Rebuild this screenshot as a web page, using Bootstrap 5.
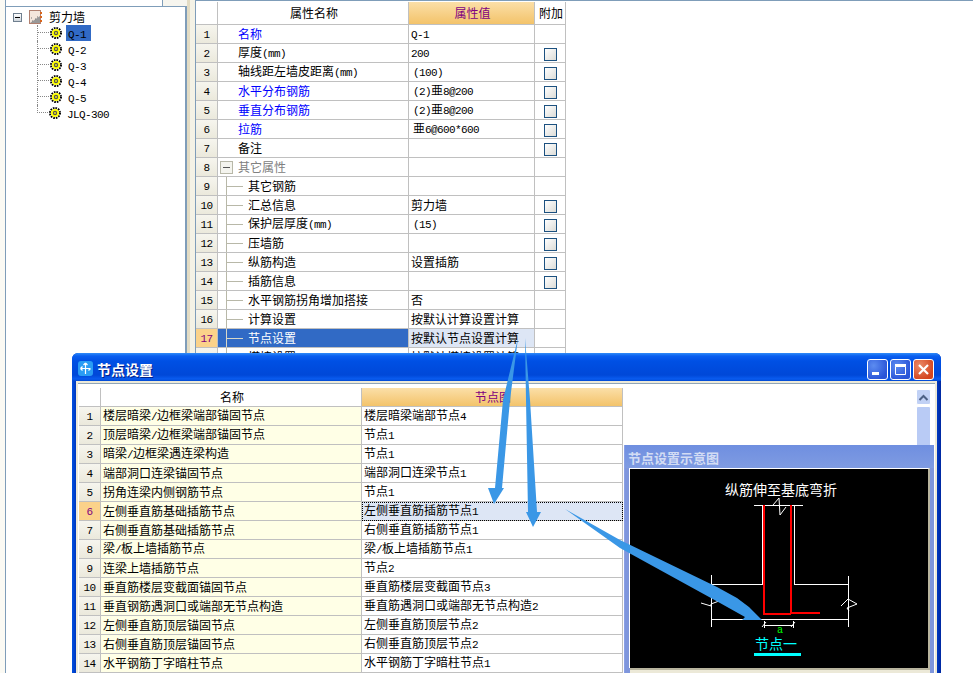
<!DOCTYPE html>
<html lang="zh-CN">
<head>
  <meta charset="UTF-8">
  <title>节点设置</title>
  <meta name="viewport" content="width=device-width, initial-scale=1">
  <link href="https://cdn.jsdelivr.net/npm/bootstrap@5.3.3/dist/css/bootstrap.min.css" rel="stylesheet">
  <style>
    html, body {
      height: 673px;
      overflow: hidden;
    }
    body {
      position: relative;
      background: #fff;
      color: #000;
      font-family: "Noto Sans CJK SC", "Liberation Sans", sans-serif;
      font-size: 12px;
      line-height: 1;
    }
    .lat {
      font-family: "Liberation Mono", monospace;
      font-size: 11px;
      letter-spacing: -0.6px;
    }

    /* left tree pane */
    .tree-pane {
      width: 187px;
      height: 673px;
      padding-left: 5px;
      background: #fbfaf4;
    }
    .tree-top {
      height: 6px;
    }
    .tree-top-a {
      width: 157px;
      background: #fff;
      border-left: 1px solid #7f9db9;
    }
    .tree-top-b {
      width: 25px;
      background: #f6f5ee;
      border-left: 1px solid #7f9db9;
    }
    .tree-body {
      height: 667px;
      padding: 2px 0 0 7px;
      background: #fff;
      border: 1px solid #7f9db9;
      border-right-width: 2px;
      border-bottom: 0;
    }
    .tree-row {
      height: 16px;
    }
    .tree-box {
      width: 9px;
      height: 9px;
      border: 1px solid #6f7f8f;
      background: linear-gradient(#fff, #cfd6dc);
      margin-right: 7px;
    }
    .tree-box i {
      display: block;
      width: 5px;
      height: 1px;
      margin: 3px 1px;
      background: #000;
    }
    .tree-root-icon {
      margin-right: 6px;
    }
    .tree-kids {
      margin-left: 24px;
    }
    .tree-kid {
      border-left: 1px dotted #888;
    }
    .tree-link {
      width: 11px;
      height: 8px;
      align-self: flex-start;
      border-bottom: 1px dotted #888;
      margin-right: 1px;
    }
    .tree-kid-last {
      border-left: 0;
      padding-left: 1px;
    }
    .tree-kid-last .tree-link {
      margin-left: -1px;
      border-left: 1px dotted #888;
    }
    .tree-name {
      margin-left: 4px;
      padding: 2px;
      height: 16px;
      line-height: 12px;
    }
    .tree-name-sel {
      background: #316ac5;
      width: 25px;
    }

    /* splitter */
    .split-bar {
      width: 8px;
      height: 673px;
      background: linear-gradient(90deg, #e3dcc4 0 3px, #f4f2e6 3px);
    }

    /* property panel */
    .prop-pane {
      height: 353px;
      padding-top: 1px;
      border-top: 1px solid #7f9db9;
      border-left: 1px solid #7f9db9;
      overflow: hidden;
    }

    /* shared grid */
    .table.attr-grid {
      width: auto;
      margin: 0;
      table-layout: fixed;
      border-collapse: separate;
      border-spacing: 0;
      font-size: 12px;
      line-height: 1;
    }
    .table.attr-grid > :not(caption) > * > * {
      padding: 0 0 0 2px;
      height: 19px;
      vertical-align: middle;
      white-space: nowrap;
      overflow: hidden;
      border: 0;
      border-right: 1px solid #c0c0c0;
      border-bottom: 1px solid #c0c0c0;
      background: #fff;
      color: #000;
      box-shadow: none;
    }
    .attr-grid > thead > tr > th {
      font-weight: 400;
      text-align: center;
      font-size: 12px;
      background: linear-gradient(#f7f6f0, #e9e7da);
    }
    .table.attr-grid > thead > tr > th.head-val {
      background: linear-gradient(#fbdfa8, #f3c36a);
      color: #800080;
    }
    .table.attr-grid > tbody > tr > td.num {
      padding: 0;
      text-align: center;
      background: linear-gradient(#f6f5ee, #ebe9dc);
    }
    .table.attr-grid > tbody > tr > td.num-sel {
      background: #fbd28a;
      color: #800080;
    }
    .table.attr-grid > tbody > tr > td.node-name {
      background: #ffffe6;
    }
    .prop-grid > tbody > tr > td.name {
      padding-left: 20px;
    }
    .table.attr-grid > tbody > tr > td.name-link {
      color: #00f;
    }
    .table.attr-grid > tbody > tr > td.name-group {
      color: #808080;
      position: relative;
    }
    .table.attr-grid > tbody > tr > td.name-kid {
      padding-left: 30px;
      background:
        linear-gradient(#b8b8a8, #b8b8a8) 8px 0 / 1px 100% no-repeat,
        linear-gradient(#b8b8a8, #b8b8a8) 9px 9px / 16px 1px no-repeat,
        #fff;
    }
    .table.attr-grid > tbody > tr > td.name-sel {
      color: #fff;
      background:
        linear-gradient(#d8d8c8, #d8d8c8) 8px 0 / 1px 100% no-repeat,
        linear-gradient(#d8d8c8, #d8d8c8) 9px 9px / 16px 1px no-repeat,
        #316ac5;
    }
    .table.attr-grid > tbody > tr > td.val-inset {
      padding-left: 4px;
    }
    .table.attr-grid > tbody > tr > td.val-sel {
      background: #dde6f5;
    }
    .table.attr-grid > tbody > tr > td.val-focus {
      background: #dde6f5;
      outline: 1px dotted #000;
      outline-offset: -1px;
    }
    .table.attr-grid > tbody > tr > td.cell-check {
      padding: 0;
      text-align: center;
    }
    .group-box {
      position: absolute;
      left: 2px;
      top: 3px;
      width: 13px;
      height: 13px;
      border: 1px solid #b8b8a8;
      background: #f4f4ee;
    }
    .group-box i {
      display: block;
      width: 7px;
      height: 1px;
      margin: 5px 2px;
      background: #555;
    }
    .form-check-input.attr-check {
      width: 13px;
      height: 13px;
      margin: 2px 0 0 1px;
      float: none;
      vertical-align: top;
      border: 1px solid #1c5180;
      border-radius: 0;
      background: linear-gradient(135deg, #fff, #dcdcd7);
    }
    .prop-grid > thead > tr > th {
      height: 23px !important;
    }

    /* node settings window */
    .win-node {
      position: absolute;
      left: 72px;
      top: 353px;
      width: 869px;
      height: 320px;
      padding: 0 4px;
      background: linear-gradient(90deg, #0050e0 0, #0038c0 4px, #0038c0 865px, #0028a0 100%);
      border-radius: 6px 6px 0 0;
    }
    .win-title {
      height: 28px;
      margin: 0 -4px;
      padding: 6px 7px 0 6px;
      border-radius: 6px 6px 0 0;
      background: linear-gradient(#2f8cf8 0, #0a5ff0 3px, #0050e4 8px, #0048d8 22px, #0a5cf0 26px, #0048d0 100%);
    }
    .win-icon {
      width: 15px;
      height: 15px;
      margin: 2px 4px 0 0;
    }
    .win-text {
      color: #fff;
      font-size: 14px;
      font-weight: 700;
      line-height: 20px;
      text-shadow: 1px 1px 0 #00208a;
    }
    .win-btn {
      width: 21px;
      height: 21px;
      margin-left: 2px;
      border: 1px solid #fff;
      border-radius: 3px;
      background: radial-gradient(circle at 30% 30%, #5c8cf0, #2a55d8 75%);
    }
    .win-btn-close {
      background: radial-gradient(circle at 30% 30%, #ea8a68, #d4451f 75%);
    }
    .win-body {
      position: relative;
      height: 292px;
      padding: 5px 0 0 1px;
      background: #fff;
      border: 2px solid #ece9d8;
      border-bottom: 0;
      box-shadow: inset 0 1px 0 #8fa5b8;
    }
    .scroll-side {
      position: absolute;
      right: 4px;
      top: 6px;
      width: 15px;
    }
    .scroll-up {
      height: 16px;
      border: 1px solid #fff;
      border-radius: 2px;
      background: #c1d1f5;
      margin-bottom: 1px;
    }
    .scroll-thumb {
      height: 60px;
      border: 1px solid #fff;
      border-radius: 2px;
      background: #b9cbf5;
    }

    /* preview window on top of the node window */
    .win-preview {
      position: absolute;
      left: 552px;
      top: 92px;
      width: 310px;
      height: 228px;
      padding: 0 4px;
      background: #7f96dc;
      border-left: 1px solid #8aa0e6;
    }
    .preview-title {
      height: 23px;
      margin: 0 -4px;
      padding: 2px 0 0 3px;
      line-height: 22px;
      font-size: 13px;
      font-weight: 700;
      color: #d2dcf4;
      background: linear-gradient(#6f8fe0, #7f9be2);
    }
    .preview-canvas {
      display: block;
      width: 301px;
      height: 200px;
      background: #000;
      box-sizing: border-box;
      border-left: 1px solid #fff;
      border-top: 1px solid #fff;
      border-right: 2px solid #b8b49e;
    }
    .preview-foot {
      height: 5px;
      margin-left: 1px;
      border-top: 2px solid #b8b49e;
      background: #ece9d8;
    }
    .overlay-arrows {
      position: absolute;
      left: 0;
      top: 0;
      pointer-events: none;
    }
  </style>
</head>
<body>

  <div class="d-flex">
    <!-- Tree -->
    <div class="tree-pane">
      <div class="tree-top d-flex">
        <div class="tree-top-a"></div>
        <div class="tree-top-b"></div>
      </div>
      <div class="tree-body">
        <div class="tree-row d-flex align-items-center">
          <span class="tree-box"><i></i></span>
          <svg width="14" height="14" viewBox="0 0 14 14" class="tree-root-icon">
            <rect x="0.5" y="0.5" width="11" height="13" fill="#f3e6dc" stroke="#b08070"/>
            <path d="M1 13L11 13L11 6Z" fill="#999"/>
            <path d="M3 11h1M6 9h1M8 7h1M2 8h1" stroke="#777"/>
            <path d="M12 2v2M12 6v2M12 10v2" stroke="#d8661c" stroke-width="2"/>
          </svg>
          <span>剪力墙</span>
        </div>
        <div class="tree-kids" id="treeKids"></div>
      </div>
    </div>
    <div class="split-bar"></div>

    <!-- Properties -->
    <div class="prop-pane flex-grow-1">
      <table class="table attr-grid prop-grid">
        <colgroup><col style="width:22px"><col style="width:191px"><col style="width:126px"><col style="width:31px"></colgroup>
        <thead>
          <tr><th></th><th>属性名称</th><th class="head-val">属性值</th><th>附加</th></tr>
        </thead>
        <tbody id="propRows"></tbody>
      </table>
    </div>
  </div>

  <!-- Node settings -->
  <div class="win-node">
    <div class="win-title d-flex align-items-start">
      <svg class="win-icon" viewBox="0 0 15 15">
        <rect width="15" height="15" rx="3" fill="#2a9cf4"/>
        <path d="M7.5 2v11M3 7.5h9M2.5 7.5l2-2M2.5 7.5l2 2M7.5 2l-2 2M7.5 2l2 2M12.5 7.5l-2 2" stroke="#fff" stroke-width="1.2" fill="none"/>
      </svg>
      <span class="win-text flex-grow-1">节点设置</span>
      <span class="win-btn">
        <svg width="19" height="19" viewBox="0 0 19 19"><rect x="4" y="12" width="7" height="3" fill="#fff"/></svg>
      </span>
      <span class="win-btn">
        <svg width="19" height="19" viewBox="0 0 19 19"><path d="M4.5 6.5h10v8h-10z" fill="none" stroke="#fff"/><rect x="4" y="4" width="11" height="2.5" fill="#fff"/></svg>
      </span>
      <span class="win-btn win-btn-close">
        <svg width="19" height="19" viewBox="0 0 19 19"><path d="M5 5l9 9M14 5l-9 9" stroke="#fff" stroke-width="2.2"/></svg>
      </span>
    </div>
    <div class="win-body">
      <table class="table attr-grid node-grid">
        <colgroup><col style="width:22px"><col style="width:261px"><col style="width:261px"></colgroup>
        <thead>
          <tr><th></th><th>名称</th><th class="head-val">节点图</th></tr>
        </thead>
        <tbody id="nodeRows"></tbody>
      </table>
      <div class="scroll-side">
        <div class="scroll-up">
          <svg width="13" height="14" viewBox="0 0 13 14"><path d="M2.5 9l4-4 4 4" fill="none" stroke="#4d6185" stroke-width="2"/></svg>
        </div>
        <div class="scroll-thumb"></div>
      </div>
    </div>

    <div class="win-preview">
      <div class="preview-title">节点设置示意图</div>
      <svg class="preview-canvas" viewBox="630 469 298 199">
        <text x="781" y="495" fill="#fff" font-size="14" text-anchor="middle">纵筋伸至基底弯折</text>
        <g fill="none" stroke="#fff" shape-rendering="crispEdges">
          <path d="M754 505.5h49M762.5 505v79.5H711.5M794.5 505v79.5H848.5"/>
          <path d="M711.5 575v52M848.5 576v51M711 619.5h138"/>
          <path d="M764.5 621v7M793.5 621v7M764 625.5h30"/>
        </g>
        <g fill="none" stroke="#fff">
          <path d="M773 505l6-7 1 17 6-8"/>
          <path d="M701 603l10 3 0-2 8-3"/>
          <path d="M841 606l7-7 9 5-10 4 2 3"/>
          <path d="M762 627l4-5M791 627l4-5"/>
        </g>
        <g fill="none" stroke="#f00" stroke-width="2" shape-rendering="crispEdges">
          <path d="M764 505v109h27M791 505v109M791 613h29"/>
        </g>
        <text x="780" y="633" fill="#0f0" font-size="10" text-anchor="middle" font-family="Liberation Mono, monospace">a</text>
        <text x="776" y="649" fill="#0ff" font-size="14" text-anchor="middle">节点一</text>
        <rect x="754" y="653" width="47" height="3" fill="#0ff"/>
      </svg>
      <div class="preview-foot"></div>
    </div>
  </div>

  <!-- Callout arrows drawn over the screenshot -->
  <svg class="overlay-arrows" width="973" height="673" viewBox="0 0 973 673">
    <g fill="#3a97e6">
      <polygon points="518,338 510,400 502,488 504,488 494,504 488,488 495,488 503,400"/>
      <polygon points="525,338 530,400 537,512 541,512 533,527 526,512 528,512 526,400"/>
      <polygon points="565,509 620,540 717,587 737,598 749,607 762,620 742,620 745,617 720,603 620,548"/>
    </g>
  </svg>

  <script src="https://cdn.jsdelivr.net/npm/bootstrap@5.3.3/dist/js/bootstrap.bundle.min.js"></script>
  <script>
    // ASCII runs use a narrower font so they keep the half-width look
    function fmt(text) {
      return text.replace(/[\x21-\x7e]+/g, m => `<span class="lat">${m}</span>`);
    }

    const gear = `<svg width="12" height="12" viewBox="0 0 12 12">
      <circle cx="6" cy="6" r="5" fill="none" stroke="#000" stroke-width="2" stroke-dasharray="1.6 1"/>
      <circle cx="6" cy="6" r="4" fill="#ff0"/>
      <circle cx="6" cy="6" r="2.2" fill="#555"/>
      <circle cx="6" cy="6" r="0.9" fill="#ff0"/>
    </svg>`;

    const treeItems = ["Q-1", "Q-2", "Q-3", "Q-4", "Q-5", "JLQ-300"];
    document.getElementById("treeKids").innerHTML = treeItems.map((name, i) => `
      <div class="tree-row d-flex align-items-center tree-kid ${i === treeItems.length - 1 ? "tree-kid-last" : ""}">
        <span class="tree-link"></span>${gear}
        <span class="tree-name ${i === 0 ? "tree-name-sel" : ""}">${fmt(name)}</span>
      </div>`).join("");

    // [name, value, has checkbox, kind]
    const props = [
      ["名称", "Q-1", 0, "link"],
      ["厚度(mm)", "200", 1, ""],
      ["轴线距左墙皮距离(mm)", "(100)", 1, ""],
      ["水平分布钢筋", "(2)亜8@200", 1, "link"],
      ["垂直分布钢筋", "(2)亜8@200", 1, "link"],
      ["拉筋", "亜6@600*600", 1, "link"],
      ["备注", "", 1, ""],
      ["其它属性", "", 0, "group"],
      ["其它钢筋", "", 0, "kid"],
      ["汇总信息", "剪力墙", 1, "kid"],
      ["保护层厚度(mm)", "(15)", 1, "kid"],
      ["压墙筋", "", 1, "kid"],
      ["纵筋构造", "设置插筋", 1, "kid"],
      ["插筋信息", "", 1, "kid"],
      ["水平钢筋拐角增加搭接", "否", 0, "kid"],
      ["计算设置", "按默认计算设置计算", 0, "kid"],
      ["节点设置", "按默认节点设置计算", 0, "sel"],
      ["搭接设置", "按默认搭接设置计算", 0, "kid"]
    ];

    const nameClass = { link: "name-link", group: "name-group", kid: "name-kid", sel: "name-kid name-sel" };

    document.getElementById("propRows").innerHTML = props.map((p, i) => `
      <tr>
        <td class="num ${p[3] === "sel" ? "num-sel" : ""}">${fmt(String(i + 1))}</td>
        <td class="name ${nameClass[p[3]] || ""}">${p[3] === "group" ? '<span class="group-box"><i></i></span>' : ""}${fmt(p[0])}</td>
        <td class="${p[3] === "sel" ? "val-sel" : ""} ${/^[(亜]/.test(p[1]) ? "val-inset" : ""}">${fmt(p[1])}</td>
        <td class="cell-check">${p[2] ? '<input class="form-check-input attr-check" type="checkbox">' : ""}</td>
      </tr>`).join("");

    const nodes = [
      ["楼层暗梁/边框梁端部锚固节点", "楼层暗梁端部节点4"],
      ["顶层暗梁/边框梁端部锚固节点", "节点1"],
      ["暗梁/边框梁遇连梁构造", "节点1"],
      ["端部洞口连梁锚固节点", "端部洞口连梁节点1"],
      ["拐角连梁内侧钢筋节点", "节点1"],
      ["左侧垂直筋基础插筋节点", "左侧垂直筋插筋节点1"],
      ["右侧垂直筋基础插筋节点", "右侧垂直筋插筋节点1"],
      ["梁/板上墙插筋节点", "梁/板上墙插筋节点1"],
      ["连梁上墙插筋节点", "节点2"],
      ["垂直筋楼层变截面锚固节点", "垂直筋楼层变截面节点3"],
      ["垂直钢筋遇洞口或端部无节点构造", "垂直筋遇洞口或端部无节点构造2"],
      ["左侧垂直筋顶层锚固节点", "左侧垂直筋顶层节点2"],
      ["右侧垂直筋顶层锚固节点", "右侧垂直筋顶层节点2"],
      ["水平钢筋丁字暗柱节点", "水平钢筋丁字暗柱节点1"]
    ];

    document.getElementById("nodeRows").innerHTML = nodes.map((n, i) => `
      <tr>
        <td class="num ${i === 5 ? "num-sel" : ""}">${fmt(String(i + 1))}</td>
        <td class="node-name">${fmt(n[0])}</td>
        <td class="${i === 5 ? "val-focus" : ""}">${fmt(n[1])}</td>
      </tr>`).join("");
  </script>

</body>
</html>
